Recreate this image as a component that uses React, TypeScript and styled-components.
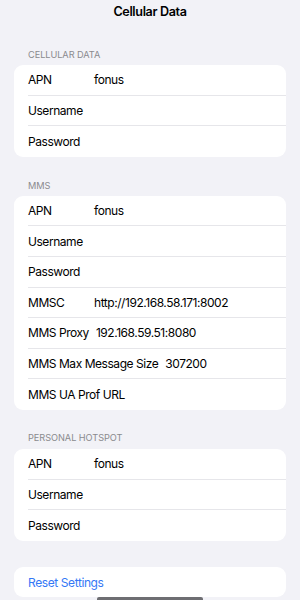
import React from "react";
import styled, { createGlobalStyle } from "styled-components";

const Global = createGlobalStyle`
  html, body { margin: 0; padding: 0; background: #f2f2f7; }
  body { font-family: Inter, "Noto Sans", "Liberation Sans", sans-serif; -webkit-font-smoothing: antialiased; }
  * { box-sizing: border-box; }
`;

const Page = styled.div`
  width: 300px;
  height: 600px;
  position: relative;
  overflow: hidden;
  background: #f2f2f7;
  display: flex;
  flex-direction: column;
`;

const TitleBar = styled.div`
  height: 22px;
  display: flex;
  align-items: center;
  justify-content: center;
  font-size: 12.6px;
  font-weight: 600;
  color: #000;
  letter-spacing: -0.35px;
`;

const Section = styled.section<{ $top: number }>`
  margin-top: ${(p) => p.$top}px;
  padding: 0 14px;
  display: flex;
  flex-direction: column;
`;

const Header = styled.div<{ $gap: number }>`
  height: 12px;
  line-height: 12px;
  padding-left: 14px;
  margin-bottom: ${(p) => p.$gap}px;
  font-size: 9.2px;
  color: #8a8a8e;
  text-transform: uppercase;
  letter-spacing: -0.05px;
`;

const Card = styled.div`
  background: #fff;
  border-radius: 9px;
  overflow: hidden;
  display: flex;
  flex-direction: column;
`;

const Row = styled.div`
  height: 30.6px;
  padding-left: 14px;
  display: flex;
`;

const RowInner = styled.div<{ $last?: boolean }>`
  flex: 1;
  display: flex;
  align-items: center;
  gap: 7px;
  border-bottom: ${(p) => (p.$last ? "none" : "1px solid #e6e6ea")};
  font-size: 12px;
  color: #000;
  letter-spacing: -0.45px;
`;

const Label = styled.span`
  min-width: 59px;
  white-space: nowrap;
`;

const Value = styled.span`
  white-space: nowrap;
`;

const LinkText = styled.span`
  color: #3478f6;
  font-size: 12px;
  letter-spacing: -0.4px;
`;

const HomeIndicator = styled.div`
  position: absolute;
  left: 97px;
  bottom: 0;
  width: 106px;
  height: 3px;
  border-radius: 2px 2px 0 0;
  background: #6e6e72;
`;

type Item = [string, string];

const Group: React.FC<{ items: Item[] }> = ({ items }) => (
  <Card>
    {items.map(([l, v], i) => (
      <Row key={l}>
        <RowInner $last={i === items.length - 1}>
          <Label>{l}</Label>
          {v && <Value>{v}</Value>}
        </RowInner>
      </Row>
    ))}
  </Card>
);

export default function App() {
  return (
    <>
      <Global />
      <Page>
        <TitleBar>Cellular Data</TitleBar>
        <Section $top={27}>
          <Header $gap={4}>Cellular Data</Header>
          <Group items={[["APN", "fonus"], ["Username", ""], ["Password", ""]]} />
        </Section>
        <Section $top={23}>
          <Header $gap={4}>MMS</Header>
          <Group
            items={[
              ["APN", "fonus"],
              ["Username", ""],
              ["Password", ""],
              ["MMSC", "http://192.168.58.171:8002"],
              ["MMS Proxy", "192.168.59.51:8080"],
              ["MMS Max Message Size", "307200"],
              ["MMS UA Prof URL", ""],
            ]}
          />
        </Section>
        <Section $top={22}>
          <Header $gap={5}>Personal Hotspot</Header>
          <Group items={[["APN", "fonus"], ["Username", ""], ["Password", ""]]} />
        </Section>
        <Section $top={26}>
          <Card>
            <Row>
              <RowInner $last>
                <LinkText>Reset Settings</LinkText>
              </RowInner>
            </Row>
          </Card>
        </Section>
        <HomeIndicator />
      </Page>
    </>
  );
}
